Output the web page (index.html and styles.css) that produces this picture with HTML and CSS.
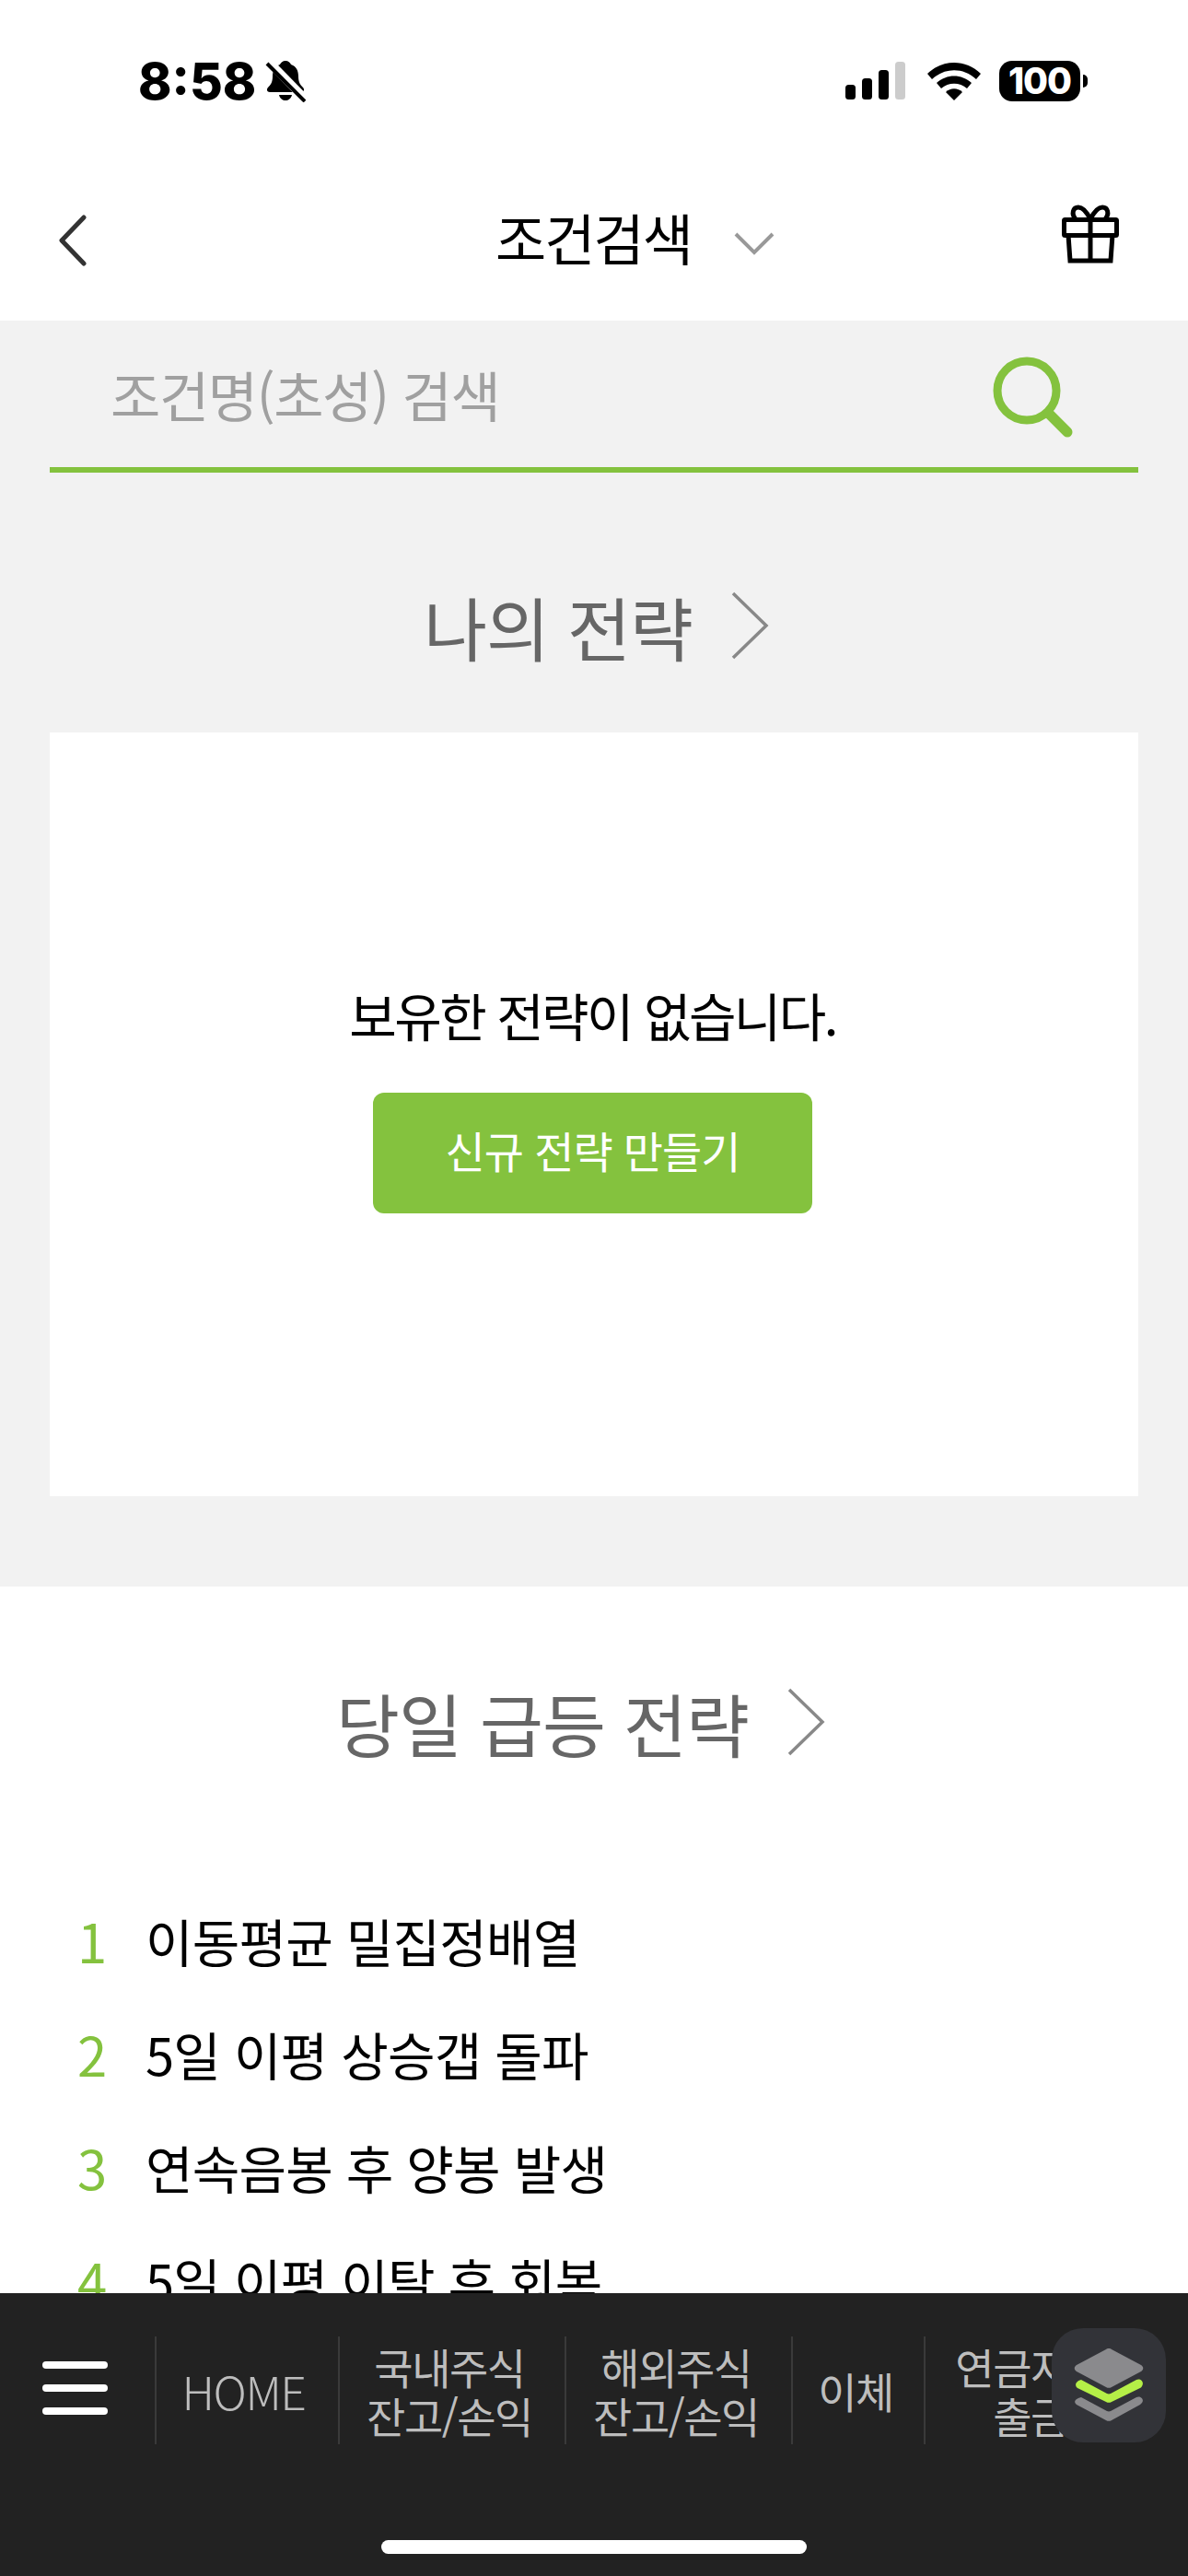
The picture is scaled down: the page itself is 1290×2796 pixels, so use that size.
FILE: index.html
```html
<!DOCTYPE html>
<html lang="ko">
<head>
    <meta charset="UTF-8">
    <meta name="viewport" content="width=device-width, initial-scale=1.0">
    <title>조건검색</title>
    <link rel="stylesheet" href="styles.css">
</head>
<body>
    <div class="screen">
        <div class="status-bar">
            <div class="status-left">
                <span class="time">8:58</span>
                <svg class="bell" viewBox="0 0 44 46" width="44" height="46">
                    <path d="M22 1c3 0 5 2 6 4 6 2 8 7 8 13 0 6 2 9 5 12 2 2 1 5-2 5H5c-3 0-4-3-2-5 3-3 5-6 5-12 0-6 2-11 8-13 1-2 3-4 6-4z" fill="#000"/>
                    <path d="M15 38h14c-1 4-4 6-7 6s-6-2-7-6z" fill="#000"/>
                    <path d="M3 1l40 41" stroke="#fff" stroke-width="9"/>
                    <path d="M2 4l41 41" stroke="#000" stroke-width="4"/>
                </svg>
            </div>
            <div class="status-right">
                <svg class="signal" viewBox="0 0 66 42" width="66" height="42">
                    <rect x="0" y="25" width="11" height="16" rx="3.5" fill="#000"/>
                    <rect x="18" y="18" width="11" height="23" rx="3.5" fill="#000"/>
                    <rect x="36" y="9" width="11" height="32" rx="3.5" fill="#000"/>
                    <rect x="54" y="0" width="11" height="41" rx="3.5" fill="#ccc"/>
                </svg>
                <svg class="wifi" viewBox="0 0 58 42" width="58" height="42">
                    <path d="M0 13C16-3 42-3 58 13l-5 6C39 6 19 6 5 19z" fill="#000"/>
                    <path d="M10 23c11-10 27-10 38 0l-5 6c-8-7-20-7-28 0z" fill="#000"/>
                    <path d="M20 33c5-5 13-5 18 0L29 42z" fill="#000"/>
                </svg>
                <div class="battery"><span class="battery-level">100</span></div>
                <div class="battery-cap"></div>
            </div>
        </div>

        <header class="top-nav">
            <svg class="back-icon" viewBox="0 0 34 56" width="34" height="56">
                <path d="M29 3L5 28l24 25" fill="none" stroke="#333" stroke-width="5" stroke-linecap="round" stroke-linejoin="round"/>
            </svg>
            <div class="nav-title">
                <span>조건검색</span>
                <svg viewBox="0 0 44 26" width="44" height="26">
                    <path d="M2 3l20 20L42 3" fill="none" stroke="#999" stroke-width="4"/>
                </svg>
            </div>
            <svg class="gift-icon" viewBox="0 0 62 64" width="62" height="64">
                <g fill="none" stroke="#000" stroke-width="5">
                    <rect x="2.500" y="16.500" width="57" height="17" rx="1"/>
                    <path d="M7 33l2 28h44l2-28"/>
                    <path d="M31 17v44"/>
                    <path d="M31 16c-3-6-7-13-13-13-6 0-8 7-3 13"/>
                    <path d="M31 16c3-6 7-13 13-13 6 0 8 7 3 13"/>
                </g>
            </svg>
        </header>

        <main class="content">
            <section class="my-section">
                <div class="search-box">
                    <span class="search-placeholder">조건명(초성) 검색</span>
                    <svg class="search-icon" viewBox="0 0 88 88" width="88" height="88">
                        <circle cx="37" cy="37" r="32" fill="none" stroke="#84c23e" stroke-width="9"/>
                        <path d="M61 62l20 20" stroke="#84c23e" stroke-width="11" stroke-linecap="round"/>
                    </svg>
                </div>

                <h2 class="section-title">
                    <span>나의 전략</span>
                    <svg class="arrow" viewBox="0 0 42 74" width="42" height="74">
                        <path d="M2 2l36 35L2 72" fill="none" stroke="#888" stroke-width="3.500"/>
                    </svg>
                </h2>

                <div class="empty-card">
                    <p>보유한 전략이 없습니다.</p>
                    <button class="new-button">신규 전략 만들기</button>
                </div>
            </section>

            <section class="hot-section">
                <h2 class="section-title">
                    <span>당일 급등 전략</span>
                    <svg class="arrow" viewBox="0 0 42 74" width="42" height="74">
                        <path d="M2 2l36 35L2 72" fill="none" stroke="#888" stroke-width="3.500"/>
                    </svg>
                </h2>
                <ol class="rank-list">
                    <li><span class="rank">1</span>이동평균 밀집정배열</li>
                    <li><span class="rank">2</span>5일 이평 상승갭 돌파</li>
                    <li><span class="rank">3</span>연속음봉 후 양봉 발생</li>
                    <li><span class="rank">4</span>5일 이평 이탈 후 회복</li>
                </ol>
            </section>
        </main>

        <nav class="bottom-bar">
            <div class="menu-row">
                <div class="hamburger"><i></i><i></i><i></i></div>
                <a class="menu-item item-home">HOME</a>
                <a class="menu-item item-stock">국내주식<br>잔고/손익</a>
                <a class="menu-item item-stock">해외주식<br>잔고/손익</a>
                <a class="menu-item item-transfer">이체</a>
                <a class="menu-item item-pension">연금저축<br>출금</a>
            </div>
            <div class="home-indicator"></div>
            <div class="float-button">
                <svg viewBox="0 0 76 80" width="76" height="80">
                    <path d="M38 0a4 4 0 0 1 3 1l32 17c3 2 3 5 0 7L41 42a6 6 0 0 1-6 0L3 25c-3-2-3-5 0-7L35 1a4 4 0 0 1 3-1z" fill="#8a8a8d"/>
                    <path d="M8 35l28 15a5 5 0 0 0 4 0L68 35c4-2 9 2 6 7a4 4 0 0 1-2 2L41 59a6 6 0 0 1-6 0L4 44c-3-2-3-7 4-9z" fill="#b5ef47" transform="translate(0 -1)"/>
                    <path d="M8 53l28 15a5 5 0 0 0 4 0L68 53c4-2 9 2 6 6l-2 2-31 17a6 6 0 0 1-6 0L3 61c-3-2-3-6 5-8z" fill="#8a8a8d"/>
                </svg>
            </div>
        </nav>
    </div>
</body>
</html>
```

FILE: styles.css
```css
* {
    box-sizing: border-box;
}

body {
    margin: 0;
    font-family: "Noto Sans CJK KR", "Noto Sans", sans-serif;
    background-color: #fff;
}

.screen {
    width: 1290px;
    height: 2796px;
    display: flex;
    flex-direction: column;
    overflow: hidden;
    position: relative;
}

/* status bar */
.status-bar {
    height: 174px;
    flex-shrink: 0;
    display: flex;
    justify-content: space-between;
    align-items: flex-start;
    padding: 60px 109px 0 150px;
}

.status-left {
    display: flex;
    align-items: center;
    gap: 10px;
}

.time {
    font-family: Inter, sans-serif;
    font-size: 55px;
    font-weight: 800;
    line-height: 56px;
    color: #000;
}

.status-right {
    display: flex;
    align-items: center;
    padding-top: 6px;
}

.signal {
    margin-right: 23px;
}

.wifi {
    margin-right: 20px;
}

.battery {
    width: 88px;
    height: 44px;
    border-radius: 14px;
    background-color: #000;
    display: flex;
    align-items: center;
    justify-content: center;
}

.battery-level {
    font-family: Inter, sans-serif;
    font-size: 39px;
    font-weight: 800;
    color: #fff;
    line-height: 44px;
    letter-spacing: -1px;
}

.battery-cap {
    width: 5px;
    height: 14px;
    margin-left: 3px;
    background-color: #000;
    border-radius: 0 7px 7px 0;
}

/* top nav */
.top-nav {
    height: 174px;
    flex-shrink: 0;
    display: flex;
    align-items: center;
    justify-content: space-between;
    padding: 0 75px 0 62px;
}

.nav-title {
    display: flex;
    align-items: center;
    gap: 46px;
    margin: -10px 0 0 130px;
    font-size: 60px;
    font-weight: 400;
    color: #000;
    letter-spacing: -2px;
}

.nav-title svg {
    margin-top: 16px;
}

.gift-icon {
    margin-top: -14px;
}

/* content */
.content {
    flex: 1;
    min-height: 0;
    overflow: hidden;
}

.my-section {
    height: 1374px;
    background-color: #f2f2f2;
    padding: 0 54px;
}

.search-box {
    height: 165px;
    display: flex;
    align-items: center;
    justify-content: space-between;
    padding: 0 70px 0 66px;
    border-bottom: 6px solid #84c23e;
}

.search-placeholder {
    font-size: 59px;
    font-weight: 400;
    color: #a0a0a0;
    letter-spacing: -1.4px;
}

.search-icon {
    margin-top: 6px;
}

.section-title {
    margin: 0;
    display: flex;
    align-items: center;
    justify-content: center;
    gap: 42px;
    font-size: 75px;
    font-weight: 400;
    color: #666;
    letter-spacing: -1px;
}

.my-section .section-title {
    height: 282px;
    padding: 50px 0 0 6px;
}

.empty-card {
    height: 829px;
    background-color: #fff;
    display: flex;
    flex-direction: column;
    align-items: center;
    padding: 266px 3px 0 0;
}

.empty-card p {
    margin: 0 0 45px;
    font-size: 56px;
    font-weight: 400;
    line-height: 80px;
    letter-spacing: -2.6px;
    color: #000;
}

.new-button {
    width: 477px;
    height: 131px;
    padding: 0 0 8px;
    border: none;
    border-radius: 12px;
    background-color: #84c23e;
    color: #fff;
    font-family: inherit;
    font-size: 47px;
    font-weight: 400;
    letter-spacing: -1px;
}

.hot-section {
    background-color: #fff;
    padding-top: 91px;
}

.hot-section .section-title {
    height: 112px;
    padding-right: 28px;
}

.rank-list {
    list-style: none;
    margin: 0;
    padding: 119px 0 0 84px;
    font-size: 56px;
    font-weight: 400;
    letter-spacing: -0.8px;
    color: #000;
}

.rank-list li {
    display: flex;
    align-items: center;
    height: 123px;
}

.rank {
    width: 74px;
    color: #84c23e;
    font-size: 58px;
    font-weight: 400;
}

/* bottom bar */
.bottom-bar {
    height: 307px;
    flex-shrink: 0;
    background-color: #222;
    position: relative;
    padding-top: 47px;
}

.menu-row {
    display: flex;
    align-items: stretch;
    height: 117px;
    overflow: hidden;
}

.hamburger {
    width: 168px;
    flex-shrink: 0;
    display: flex;
    flex-direction: column;
    justify-content: center;
    gap: 17px;
    padding: 0 46px 6px;
}

.hamburger i {
    display: block;
    height: 8px;
    width: 71px;
    background-color: #fff;
    border-radius: 4px;
}

.menu-item {
    flex-shrink: 0;
    border-left: 2px solid #3a3a3a;
    display: flex;
    align-items: center;
    justify-content: center;
    padding-right: 6px;
    text-align: center;
    font-size: 46px;
    font-weight: 400;
    line-height: 53px;
    letter-spacing: -1.5px;
    color: #bdbdbd;
}

.item-home {
    width: 199px;
    font-size: 50px;
    font-weight: 300;
    padding-right: 8px;
}

.item-stock {
    width: 246px;
}

.item-transfer {
    width: 144px;
}

.item-pension {
    width: 236px;
}

.home-indicator {
    position: absolute;
    left: 414px;
    top: 268px;
    width: 462px;
    height: 15px;
    border-radius: 8px;
    background-color: #fff;
}

.float-button {
    position: absolute;
    right: 24px;
    top: 38px;
    width: 124px;
    height: 124px;
    border-radius: 34px;
    background-color: #323338;
    display: flex;
    align-items: center;
    justify-content: center;
}
```
